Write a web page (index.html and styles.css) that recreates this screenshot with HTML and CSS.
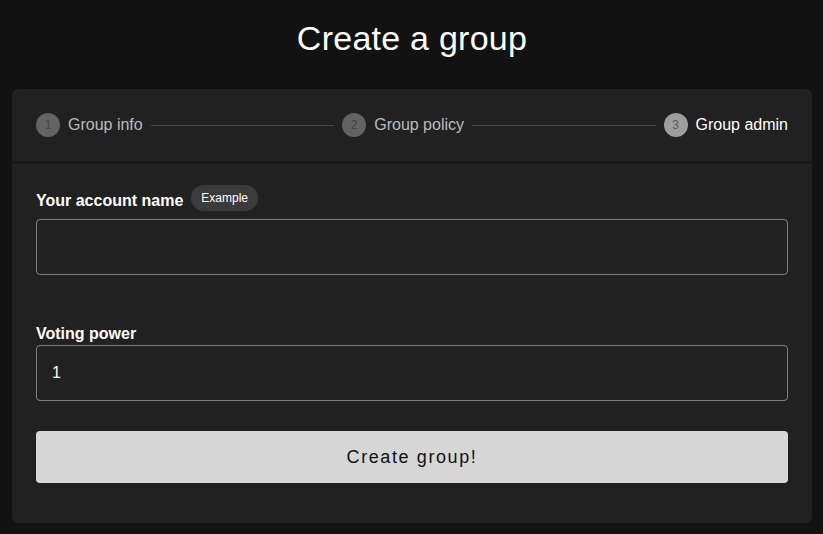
FILE: index.html
```html
<!DOCTYPE html>
<html>
<head>
<meta charset="utf-8">
<link rel="stylesheet" href="styles.css">
</head>
<body>
<main class="page">
  <h1 class="title">Create a group</h1>
  <section class="card">
    <div class="stepper">
      <div class="step">
        <span class="step-num">1</span>
        <span class="step-label">Group info</span>
      </div>
      <div class="divider"></div>
      <div class="step">
        <span class="step-num">2</span>
        <span class="step-label">Group policy</span>
      </div>
      <div class="divider"></div>
      <div class="step active">
        <span class="step-num">3</span>
        <span class="step-label">Group admin</span>
      </div>
    </div>
    <form class="form">
      <div class="label-row">
        <label class="field-label">Your account name</label>
        <span class="chip">Example</span>
      </div>
      <div class="input"></div>
      <div class="label-row second">
        <label class="field-label">Voting power</label>
      </div>
      <div class="input"><span class="value">1</span></div>
      <button type="button" class="submit">Create group!</button>
    </form>
  </section>
</main>
</body>
</html>
```

FILE: styles.css
```css
* { box-sizing: border-box; }
html, body { margin: 0; padding: 0; }
body {
  background: #121212;
  color: #fff;
  font-family: "Liberation Sans", Arial, sans-serif;
  width: 823px;
  height: 534px;
  overflow: hidden;
}
.page {
  padding: 0 11px 0 12px;
}
.title {
  margin: 0;
  font-weight: 400;
  font-size: 34px;
  letter-spacing: 0.25px;
  line-height: 40px;
  text-align: center;
  padding-top: 18px;
  height: 89px;
}
.card {
  background: #212121;
  border-radius: 6px;
  height: 434px;
}
.stepper {
  display: flex;
  align-items: center;
  height: 73px;
  padding: 0 24px;
  box-shadow: 0 2px 2px -1px rgba(0,0,0,0.45);
  border-bottom: 1px solid #1b1b1b;
}
.step {
  display: flex;
  align-items: center;
  gap: 8px;
}
.step-num {
  width: 24px;
  height: 24px;
  border-radius: 50%;
  background: #636363;
  color: #444;
  font-size: 12px;
  display: flex;
  align-items: center;
  justify-content: center;
}
.step.active .step-num {
  background: #9e9e9e;
  color: #5a5a5a;
}
.step-label {
  font-size: 16px;
  color: rgba(255,255,255,0.7);
}
.step.active .step-label { color: #fff; }
.divider {
  flex: 1;
  height: 1px;
  background: #474747;
  margin: 0 8px;
}
.form {
  padding: 23px 24px 40px;
}
.label-row {
  display: flex;
  align-items: flex-end;
  gap: 8px;
  height: 26px;
}
.label-row.second {
  margin-top: 49px;
  height: 20px;
}
.field-label {
  font-weight: 700;
  font-size: 16px;
  line-height: 20px;
}
.chip {
  align-self: flex-start;
  height: 26px;
  padding: 0 10px;
  border-radius: 13px;
  background: #3b3b3b;
  font-size: 12px;
  display: flex;
  align-items: center;
  color: #fff;
}
.input {
  margin-top: 8px;
  height: 56px;
  border: 1px solid rgba(255,255,255,0.42);
  border-radius: 4px;
  display: flex;
  align-items: center;
  padding: 0 15px;
  font-size: 16px;
}
.label-row.second + .input { margin-top: 1px; }
.submit {
  display: block;
  width: 100%;
  margin-top: 30px;
  height: 52px;
  background: #d6d6d6;
  border: none;
  border-radius: 4px;
  color: #121212;
  font-family: "Liberation Sans", Arial, sans-serif;
  font-size: 18px;
  letter-spacing: 1.6px;
}
```
